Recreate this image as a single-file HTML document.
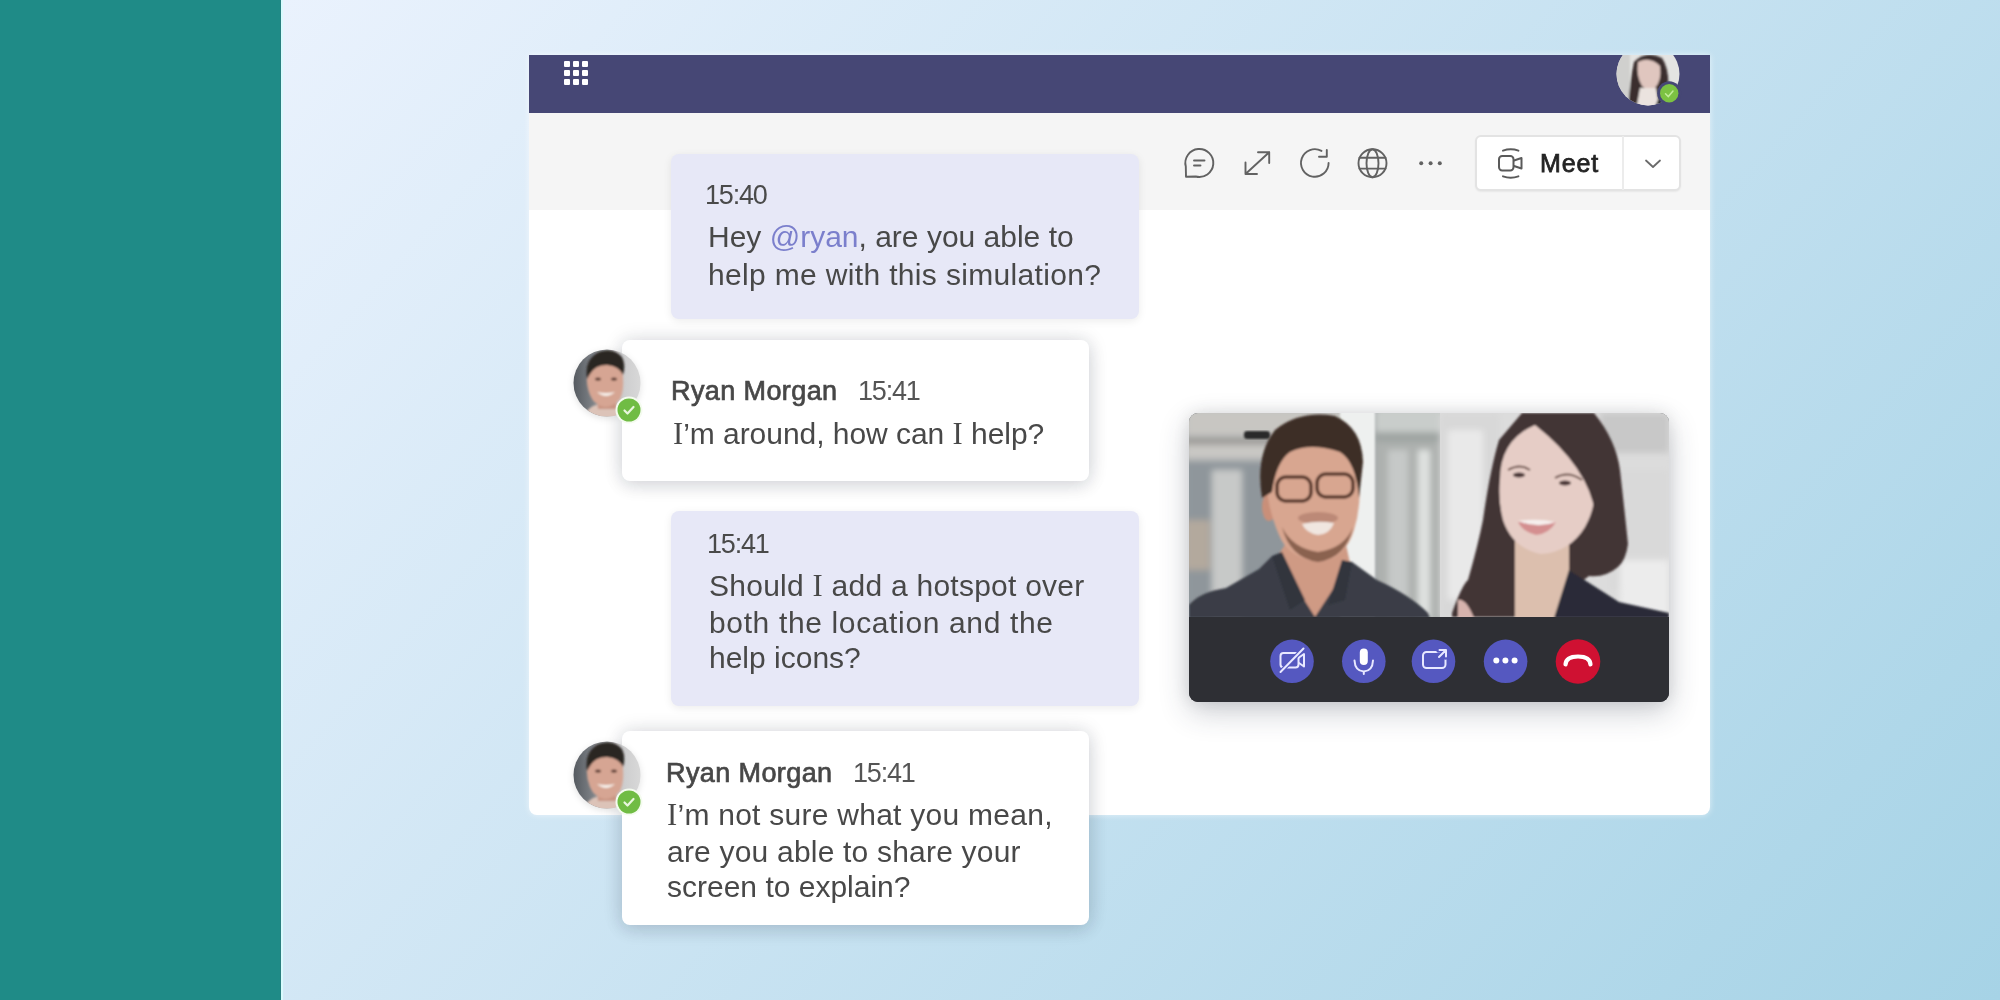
<!DOCTYPE html>
<html><head><meta charset="utf-8">
<style>
html,body{margin:0;padding:0;}
body{width:2000px;height:1000px;overflow:hidden;position:relative;font-family:"Liberation Sans",sans-serif;
 background:#1f8b87;}
#bg{position:absolute;left:281px;top:0;width:1719px;height:1000px;background:linear-gradient(132deg,#eaf2fd 0%,#a6d3e6 100%);}
.abs{position:absolute;}
.si{font-family:"Liberation Serif",serif;font-size:1.02em;}
.t{position:absolute;white-space:nowrap;filter:blur(0.35px);}
#strip{position:absolute;left:0;top:0;width:281px;height:1000px;background:#1f8b87;}
#win{position:absolute;left:529px;top:55px;width:1181px;height:760px;background:#fff;border-radius:0 0 8px 8px;
  box-shadow:0 0 6px rgba(255,255,255,0.6);}
#hdr{position:absolute;left:0;top:0;width:1181px;height:58px;background:#464775;}
#tb{position:absolute;left:0;top:58px;width:1181px;height:97px;background:#f5f5f5;}
.bub{position:absolute;border-radius:8px;}
.me{background:#e7e8f7;box-shadow:0 2px 8px rgba(0,0,0,0.08);}
.oth{background:#fff;box-shadow:0 0 20px rgba(20,30,50,0.14),0 5px 18px rgba(20,30,50,0.10);}
</style></head><body>
<div id="bg"></div><div id="strip"></div>
<div class="abs" style="left:280px;top:0;width:1px;height:1000px;background:#2a7f80"></div>
<div class="abs" style="left:281px;top:0;width:2px;height:1000px;background:#d8fbfd"></div>
<div id="win">
 <div id="hdr"></div>
 <div id="tb"></div>
</div>
<svg class="abs" style="left:560px;top:57px" width="34" height="34" viewBox="0 0 34 34"><rect x="4" y="4" width="6" height="6" rx="1" fill="#fff"/><rect x="13" y="4" width="6" height="6" rx="1" fill="#fff"/><rect x="22" y="4" width="6" height="6" rx="1" fill="#fff"/><rect x="4" y="13" width="6" height="6" rx="1" fill="#fff"/><rect x="13" y="13" width="6" height="6" rx="1" fill="#fff"/><rect x="22" y="13" width="6" height="6" rx="1" fill="#fff"/><rect x="4" y="22" width="6" height="6" rx="1" fill="#fff"/><rect x="13" y="22" width="6" height="6" rx="1" fill="#fff"/><rect x="22" y="22" width="6" height="6" rx="1" fill="#fff"/></svg>
<svg class="abs" style="left:0;top:0" width="2000" height="1000" viewBox="0 0 2000 1000">
<g fill="none" stroke="#626262" stroke-width="1.9" stroke-linecap="round" stroke-linejoin="round">
 <path d="M1185.8,166.6 A14,14 0 1 1 1195.7,176.5 L1186,176.8 Z"/>
 <path d="M1194,160.5 H1204.5 M1194,165.5 H1200.5"/>
 <path d="M1258,152.2 H1269.2 V163 M1269.2,152.2 L1245.5,174 M1245.5,162.5 V174 H1257"/>
 <path d="M1328.6,163 A13.8,13.8 0 1 1 1321.5,150.9"/>
 <path d="M1326.8,150 V156.8 H1319"/>
 <circle cx="1372.5" cy="163.3" r="14"/>
 <ellipse cx="1372.5" cy="163.3" rx="6" ry="14"/>
 <path d="M1359.5,157.8 H1385.5 M1359.5,168.6 H1385.5"/>
</g>
<g fill="#626262"><circle cx="1421.2" cy="163.2" r="2"/><circle cx="1430.6" cy="163.2" r="2"/><circle cx="1439.8" cy="163.2" r="2"/></g>
</svg>
<div class="abs" style="left:1475px;top:135px;width:206px;height:56px;box-sizing:border-box;border:2px solid #e3e3e3;border-radius:6px;background:#fff;box-shadow:0 1px 2px rgba(0,0,0,0.06)"></div>
<div class="abs" style="left:1621.5px;top:136px;width:2px;height:54px;background:#ececec"></div>
<svg class="abs" style="left:0;top:0" width="2000" height="1000" viewBox="0 0 2000 1000">
<g fill="none" stroke="#5a5a5a" stroke-width="2" stroke-linejoin="round" stroke-linecap="round">
 <rect x="1499" y="156" width="14.5" height="14.5" rx="3.2"/>
 <path d="M1514,160.5 L1521.5,158 V168.5 L1514,166"/>
 <path d="M1503,150.6 Q1510.7,147.8 1518.4,150.6 M1503,176.4 Q1510.7,179.2 1518.4,176.4"/>
</g>
<path d="M1646,160.5 L1653,167 L1660,160.5" fill="none" stroke="#6a6a6a" stroke-width="1.8" stroke-linecap="round" stroke-linejoin="round"/>
</svg>
<div class="t" style="left:1540.0px;top:151.2px;font-size:25px;line-height:25px;font-weight:400;color:#242424;letter-spacing:0.9px;-webkit-text-stroke:0.75px #242424">Meet</div>
<div class="bub me" style="left:671px;top:154px;width:468px;height:165px"></div>
<div class="bub oth" style="left:622px;top:340px;width:467px;height:141px"></div>
<div class="bub me" style="left:671px;top:511px;width:468px;height:195px"></div>
<div class="bub oth" style="left:622px;top:731px;width:467px;height:194px"></div>
<div class="t" style="left:705.0px;top:181.8px;font-size:27px;line-height:27px;font-weight:400;color:#4a4a4a;letter-spacing:-1.2px;">15:40</div>
<div class="t" style="left:708.0px;top:222.3px;font-size:30px;line-height:30px;font-weight:400;color:#484848;letter-spacing:0px;">Hey <span style="color:#7b7fcc">@ryan</span>, are you able to</div>
<div class="t" style="left:708.0px;top:259.6px;font-size:30px;line-height:30px;font-weight:400;color:#484848;letter-spacing:0.34px;">help me with this simulation?</div>
<div class="t" style="left:671.0px;top:377.8px;font-size:27px;line-height:27px;font-weight:400;color:#474747;letter-spacing:0.4px;-webkit-text-stroke:0.7px #474747">Ryan Morgan</div>
<div class="t" style="left:858.0px;top:377.8px;font-size:27px;line-height:27px;font-weight:400;color:#555;letter-spacing:-1.2px;">15:41</div>
<div class="t" style="left:673.0px;top:418.7px;font-size:30px;line-height:30px;font-weight:400;color:#484848;letter-spacing:-0.04px;"><span class="si">I</span>’m around, how can <span class="si">I</span> help?</div>
<div class="t" style="left:707.0px;top:530.8px;font-size:27px;line-height:27px;font-weight:400;color:#4a4a4a;letter-spacing:-1.2px;">15:41</div>
<div class="t" style="left:709.0px;top:571.2px;font-size:30px;line-height:30px;font-weight:400;color:#484848;letter-spacing:0.25px;">Should <span class="si">I</span> add a hotspot over</div>
<div class="t" style="left:709.0px;top:608.4px;font-size:30px;line-height:30px;font-weight:400;color:#484848;letter-spacing:0.64px;">both the location and the</div>
<div class="t" style="left:709.0px;top:642.6px;font-size:30px;line-height:30px;font-weight:400;color:#484848;letter-spacing:0px;">help icons?</div>
<div class="t" style="left:666.0px;top:759.8px;font-size:27px;line-height:27px;font-weight:400;color:#474747;letter-spacing:0.4px;-webkit-text-stroke:0.7px #474747">Ryan Morgan</div>
<div class="t" style="left:853.0px;top:759.8px;font-size:27px;line-height:27px;font-weight:400;color:#555;letter-spacing:-1.2px;">15:41</div>
<div class="t" style="left:667.0px;top:800.2px;font-size:30px;line-height:30px;font-weight:400;color:#484848;letter-spacing:0.26px;"><span class="si">I</span>’m not sure what you mean,</div>
<div class="t" style="left:667.0px;top:837.0px;font-size:30px;line-height:30px;font-weight:400;color:#484848;letter-spacing:0.2px;">are you able to share your</div>
<div class="t" style="left:667.0px;top:872.2px;font-size:30px;line-height:30px;font-weight:400;color:#484848;letter-spacing:0px;">screen to explain?</div>
<svg class="abs" style="left:561px;top:337px" width="100" height="100" viewBox="561 337 100 100">
<defs><clipPath id="ca1"><circle cx="607" cy="383" r="33.5"/></clipPath>
<linearGradient id="ga1" x1="0" y1="0" x2="1" y2="0"><stop offset="0" stop-color="#50555b"/><stop offset="0.3" stop-color="#7d8186"/><stop offset="0.65" stop-color="#c9c9ca"/><stop offset="1" stop-color="#dadada"/></linearGradient>
<filter id="fa1" x="-20%" y="-20%" width="140%" height="140%"><feGaussianBlur stdDeviation="1.1"/></filter>
<filter id="fs1" x="-30%" y="-30%" width="160%" height="160%"><feGaussianBlur stdDeviation="3"/></filter></defs>
<circle cx="607" cy="385" r="34" fill="rgba(0,0,0,0.10)" filter="url(#fs1)"/>
<g clip-path="url(#ca1)">
<rect x="571" y="347" width="72" height="72" fill="url(#ga1)"/>
<g filter="url(#fa1)">
<path d="M581,423 Q585,407 599,404 L617,404 Q631,409 635,423 Z" fill="#dcc3b8"/>
<path d="M597,393 L617,393 L616,409 L598,409 Z" fill="#c99483"/>
<path d="M587,375 Q587,361 605,360 Q623,361 623,377 Q624,391 620,399 Q613,407 605,407 Q594,405 590,395 Q586,385 587,375 Z" fill="#d6a593"/>
<path d="M587,379 Q584,359 599,352 Q613,347 622,357 Q626,365 623,375 Q619,366 607,365 Q595,365 590,374 Z" fill="#2c2522"/>
<ellipse cx="598" cy="379" rx="3" ry="1.6" fill="#5a3a30"/>
<ellipse cx="614" cy="379" rx="3" ry="1.6" fill="#5a3a30"/>
<path d="M597,392 Q606,400 615,392 Q606,394 597,392 Z" fill="#f6efe9"/>
</g></g>
<circle cx="629" cy="410" r="13.5" fill="#f4fbef"/>
<circle cx="629" cy="410" r="11.5" fill="#70bc44"/>
<path d="M624.5,410.5 L627.5,413.5 L633.5,407" fill="none" stroke="#e8f6dd" stroke-width="2.2" stroke-linecap="round" stroke-linejoin="round"/>
</svg>
<svg class="abs" style="left:561px;top:729px" width="100" height="100" viewBox="561 729 100 100">
<defs><clipPath id="ca2"><circle cx="607" cy="775" r="33.5"/></clipPath>
<linearGradient id="ga2" x1="0" y1="0" x2="1" y2="0"><stop offset="0" stop-color="#50555b"/><stop offset="0.3" stop-color="#7d8186"/><stop offset="0.65" stop-color="#c9c9ca"/><stop offset="1" stop-color="#dadada"/></linearGradient>
<filter id="fa2" x="-20%" y="-20%" width="140%" height="140%"><feGaussianBlur stdDeviation="1.1"/></filter>
<filter id="fs2" x="-30%" y="-30%" width="160%" height="160%"><feGaussianBlur stdDeviation="3"/></filter></defs>
<circle cx="607" cy="777" r="34" fill="rgba(0,0,0,0.10)" filter="url(#fs2)"/>
<g clip-path="url(#ca2)">
<rect x="571" y="739" width="72" height="72" fill="url(#ga2)"/>
<g filter="url(#fa2)">
<path d="M581,815 Q585,799 599,796 L617,796 Q631,801 635,815 Z" fill="#dcc3b8"/>
<path d="M597,785 L617,785 L616,801 L598,801 Z" fill="#c99483"/>
<path d="M587,767 Q587,753 605,752 Q623,753 623,769 Q624,783 620,791 Q613,799 605,799 Q594,797 590,787 Q586,777 587,767 Z" fill="#d6a593"/>
<path d="M587,771 Q584,751 599,744 Q613,739 622,749 Q626,757 623,767 Q619,758 607,757 Q595,757 590,766 Z" fill="#2c2522"/>
<ellipse cx="598" cy="771" rx="3" ry="1.6" fill="#5a3a30"/>
<ellipse cx="614" cy="771" rx="3" ry="1.6" fill="#5a3a30"/>
<path d="M597,784 Q606,792 615,784 Q606,786 597,784 Z" fill="#f6efe9"/>
</g></g>
<circle cx="629" cy="802" r="13.5" fill="#f4fbef"/>
<circle cx="629" cy="802" r="11.5" fill="#70bc44"/>
<path d="M624.5,802.5 L627.5,805.5 L633.5,799" fill="none" stroke="#e8f6dd" stroke-width="2.2" stroke-linecap="round" stroke-linejoin="round"/>
</svg>
<svg class="abs" style="left:1610px;top:55px" width="80" height="60" viewBox="1610 55 80 60">
<defs><clipPath id="cw"><circle cx="1648" cy="74" r="31.5"/></clipPath>
<filter id="fw" x="-20%" y="-20%" width="140%" height="140%"><feGaussianBlur stdDeviation="1.2"/></filter></defs>
<g clip-path="url(#cw)">
<rect x="1610" y="40" width="80" height="80" fill="#e4e4e2"/>
<g filter="url(#fw)">
<rect x="1610" y="40" width="20" height="80" fill="#d0d0ce"/>
<path d="M1628,110 Q1630,80 1634,62 Q1646,50 1662,58 Q1670,70 1668,92 L1662,110 Z" fill="#3a2f2d"/>
<path d="M1638,62 Q1650,56 1660,66 Q1662,80 1655,88 Q1648,92 1642,86 Q1636,76 1638,62 Z" fill="#e0c6bf"/>
<path d="M1640,88 L1656,88 L1660,110 L1636,110 Z" fill="#ebe3df"/>
<path d="M1654,110 L1660,94 L1672,98 L1680,110 Z" fill="#2a2a30"/>
</g></g>
<circle cx="1669.2" cy="93.2" r="12" fill="#464775"/>
<circle cx="1669.2" cy="93.2" r="9.2" fill="#7cc242"/>
<path d="M1665.5,93.8 L1668.3,96.6 L1673,91" fill="none" stroke="#c3ec9a" stroke-width="1.5" stroke-linecap="round"/>
</svg>
<div class="abs" style="left:1189px;top:413px;width:480px;height:289px;border-radius:9px;background:#2e2f34;box-shadow:0 10px 30px rgba(40,50,70,0.24),0 0 16px rgba(0,0,0,0.10);overflow:hidden">
<svg width="480" height="289" viewBox="1189 413 480 289" style="display:block">
<defs>
<filter id="fv" x="-5%" y="-5%" width="110%" height="110%"><feGaussianBlur stdDeviation="1.3"/></filter>
<filter id="fvb" x="-5%" y="-5%" width="110%" height="110%"><feGaussianBlur stdDeviation="3"/></filter>
<linearGradient id="gbgL" x1="0" y1="0" x2="1" y2="0"><stop offset="0" stop-color="#9ea3a6"/><stop offset="0.3" stop-color="#c9cbcb"/><stop offset="0.6" stop-color="#aeb2b4"/><stop offset="1" stop-color="#b8bbbc"/></linearGradient>
<linearGradient id="gbgR" x1="0" y1="0" x2="1" y2="0"><stop offset="0" stop-color="#b9b9b9"/><stop offset="0.25" stop-color="#e4e4e4"/><stop offset="0.7" stop-color="#dadada"/><stop offset="1" stop-color="#cfcfcf"/></linearGradient>
</defs>
<!-- man -->
<g>
<rect x="1189" y="413" width="251" height="205" fill="#a4a8aa"/>
<g filter="url(#fvb)">
<rect x="1185" y="408" width="160" height="28" fill="#c8c6c2"/>
<rect x="1185" y="438" width="160" height="7" fill="#9e9c98"/>
<rect x="1185" y="445" width="160" height="14" fill="#c9c8c4"/>
<rect x="1185" y="462" width="160" height="160" fill="#8f969b"/>
<rect x="1185" y="520" width="25" height="50" fill="#b3a99d"/>
<rect x="1212" y="470" width="30" height="150" fill="#c7c9c8"/>
<rect x="1375" y="408" width="70" height="24" fill="#c9cdcb"/>
<rect x="1375" y="432" width="70" height="10" fill="#9fa4a2"/>
<rect x="1375" y="442" width="70" height="180" fill="#adb1af"/>
<rect x="1388" y="450" width="20" height="170" fill="#c6c9c8"/>
<rect x="1418" y="450" width="12" height="170" fill="#dfe2e0"/>
</g>
<rect x="1340" y="410" width="35" height="210" fill="#eef0ef" filter="url(#fv)"/>
<rect x="1244" y="431" width="26" height="8" rx="3" fill="#2a2a2a" filter="url(#fv)"/>
<g filter="url(#fv)">
<path d="M1189,618 L1189,605 Q1200,592 1226,588 L1259,569 L1272,556 L1300,562 L1330,564 L1352,562 L1377,580 Q1410,595 1428,613 L1430,618 Z" fill="#3a3e47"/>
<path d="M1288,540 L1345,540 L1350,563 L1315,617 L1277,557 Z" fill="#cf9a84"/>
<ellipse cx="1269" cy="507" rx="7" ry="14" fill="#c98f79"/>
<path d="M1266,480 Q1266,445 1300,440 Q1345,436 1359,470 Q1362,505 1354,530 Q1345,560 1318,562 Q1288,558 1279,535 Q1268,510 1266,480 Z" fill="#d8a690"/>
<path d="M1262,498 Q1255,455 1275,430 Q1300,410 1335,416 Q1362,428 1363,462 L1359,498 Q1356,462 1340,452 Q1310,442 1290,452 Q1276,462 1272,492 Z" fill="#3d2d25"/>
<path d="M1282,527 Q1290,558 1318,562 Q1346,558 1353,527 Q1345,548 1318,552 Q1292,548 1282,527 Z" fill="#8a6250"/>
<ellipse cx="1318" cy="518" rx="20" ry="6" fill="#b58270" opacity="0.8"/>
<rect x="1277" y="477" width="34" height="24" rx="9" fill="none" stroke="#5a3a2e" stroke-width="3.5"/>
<rect x="1317" y="474" width="36" height="23" rx="9" fill="none" stroke="#5a3a2e" stroke-width="3.5"/>
<path d="M1302,524 Q1318,520 1334,523 Q1330,534 1318,535 Q1306,533 1302,524 Z" fill="#f0e6e0"/>
<path d="M1272,556 L1282,552 L1305,600 L1290,610 Z M1352,562 L1342,560 L1328,605 L1345,600 Z" fill="#30343c"/>
</g>
</g>
<!-- woman -->
<g>
<rect x="1440" y="413" width="229" height="205" fill="#dcdcdc"/>
<g filter="url(#fvb)">
<rect x="1440" y="413" width="60" height="205" fill="#d8d8d8"/>
<rect x="1448" y="430" width="35" height="170" fill="#e9e9e9"/>
<rect x="1600" y="413" width="69" height="40" fill="#c8c8c8"/>
<rect x="1610" y="470" width="59" height="120" fill="#d9d9d9"/>
<rect x="1620" y="560" width="49" height="58" fill="#ececec"/>
</g>
<g filter="url(#fv)">
<path d="M1452,613 Q1462,585 1468,580 Q1478,545 1483,520 Q1490,470 1499,440 L1522,413 L1594,413 Q1616,440 1620,470 Q1624,505 1628,544 Q1626,560 1618,567 Q1605,578 1589,576 L1570,590 L1526,617 L1452,617 Z" fill="#433536"/>
<path d="M1515,540 L1569,540 L1569,618 L1515,618 Z" fill="#dcbfae"/>
<path d="M1500,480 Q1500,440 1535,425 Q1575,440 1592,470 Q1600,500 1585,527 Q1570,552 1541,554 Q1512,548 1503,520 Q1498,500 1500,480 Z" fill="#e6cdc6"/>
<path d="M1535,425 Q1575,428 1600,470 L1596,520 Q1592,470 1535,425 Z" fill="#433536"/>
<path d="M1508,470 Q1520,463 1530,470" fill="none" stroke="#6a5048" stroke-width="2"/>
<path d="M1555,478 Q1568,470 1582,480" fill="none" stroke="#6a5048" stroke-width="2"/>
<ellipse cx="1519" cy="475" rx="6" ry="2.6" fill="#4a3634"/>
<ellipse cx="1565" cy="483" rx="6" ry="2.6" fill="#4a3634"/>
<path d="M1518,522 Q1537,520 1556,522 Q1549,534 1536,535 Q1523,532 1518,522 Z" fill="#d48f90"/>
<path d="M1518,521 Q1537,518 1556,522 Q1538,529 1518,521 Z" fill="#f6efed"/>
<path d="M1554,618 L1569,570 L1583,579 L1619,602 L1669,613 L1669,618 Z" fill="#2a2c37"/>
<path d="M1458,600 Q1466,598 1474,618 L1458,618 Z" fill="#d6b3ad"/>
</g>
</g>
<!-- controls -->
<rect x="1189" y="617" width="480" height="85" fill="#2e2f34"/>
<g>
<circle cx="1292" cy="661.3" r="21.8" fill="#5558c0"/>
<circle cx="1363.8" cy="661.3" r="21.8" fill="#5558c0"/>
<circle cx="1433.5" cy="661.3" r="21.8" fill="#5558c0"/>
<circle cx="1505.6" cy="661.3" r="21.8" fill="#5558c0"/>
<circle cx="1578" cy="661.5" r="22.3" fill="#cf1132"/>
</g>
<g fill="none" stroke="#e8e8ff" stroke-width="2" stroke-linecap="round" stroke-linejoin="round">
<rect x="1280.5" y="653" width="18" height="14.5" rx="3"/>
<path d="M1299,657.5 L1304,654 V666.5 L1299,663"/>
<path d="M1280.5,672 L1303.5,648.5" stroke="#5558c0" stroke-width="4.5"/>
<path d="M1280.5,672 L1303.5,648.5"/>
<path d="M1354.5,660.5 Q1355,671 1363.8,671.5 Q1372.5,671 1373,660.5 M1363.8,671.5 V674"/>
<rect x="1423" y="652" width="22.5" height="16" rx="3.5"/>
<path d="M1438.5,650.5 H1445.5 V657.5 M1445.5,650.5 L1438.5,657.5" stroke="#5558c0" stroke-width="4.5"/>
<path d="M1439.5,650 H1446 V656.5 M1446,650 L1439,657"/>
</g>
<rect x="1359.8" y="648.5" width="8" height="16.5" rx="4" fill="#fff"/>
<g fill="#fff"><circle cx="1496.3" cy="660.6" r="3"/><circle cx="1505.4" cy="660.6" r="3"/><circle cx="1514.6" cy="660.6" r="3"/></g>
<path d="M1565.5,664.5 Q1566,656.5 1578,656.5 Q1590,656.5 1590.5,664.5" fill="none" stroke="#fff" stroke-width="4.2" stroke-linecap="round"/>
</svg></div>
</body></html>
